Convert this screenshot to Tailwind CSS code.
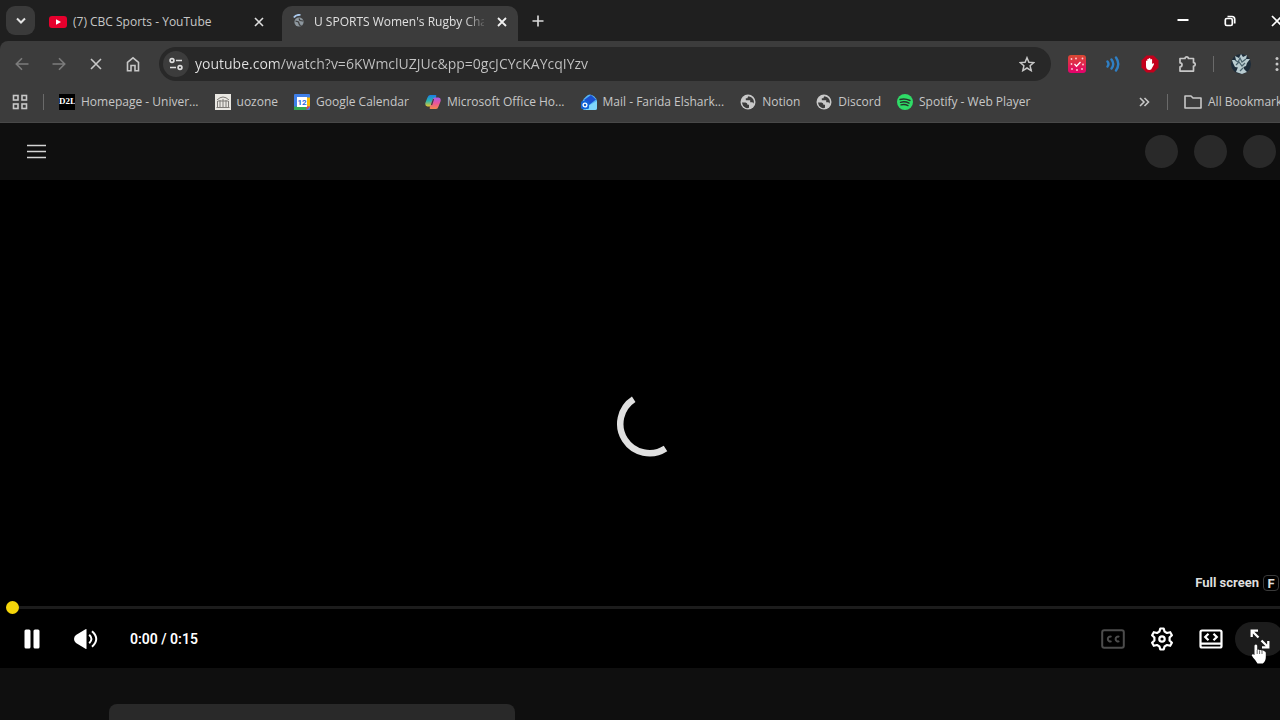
<!DOCTYPE html>
<html lang="en">
<head>
<meta charset="utf-8">
<meta name="viewport" content="width=device-width, initial-scale=1">
<title>U SPORTS Women's Rugby Championship - YouTube</title>
<script src="https://cdn.jsdelivr.net/npm/@tailwindcss/browser@4"></script>
</head>
<body class="flex h-screen flex-col overflow-hidden bg-[#0f0f0f] font-['Open_Sans','Noto_Sans',sans-serif] text-[#c7c7c7]">

<!-- Tab strip -->
<header class="flex h-[41px] flex-none items-end bg-[#1f1f1f]">
  <button aria-label="Search tabs" class="mb-1.5 ml-1.5 grid size-[29px] flex-none place-items-center rounded-[9px] bg-[#3a3a3a]">
    <svg class="size-3" viewBox="0 0 12 12" fill="none" stroke="#e3e3e3" stroke-width="2"><path d="M2 3.500l4 4 4-4"/></svg>
  </button>
  <div class="flex h-[35px] w-[247px] flex-none items-center pb-1 pl-3.5">
    <svg class="h-3 w-[18px] flex-none" viewBox="0 0 18 12"><rect width="18" height="12" rx="3" fill="#e6002d"/><path d="M7 3.200v5.600L12 6z" fill="#fff"/></svg>
    <a href="#" class="ml-1.5 w-[170px] truncate text-xs leading-5">(7) CBC Sports - YouTube</a>
    <button aria-label="Close tab" class="ml-2 grid size-4 flex-none place-items-center">
      <svg class="size-2.5" viewBox="0 0 10 10" stroke="#dedede" stroke-width="1.600"><path d="M1 1l8 8M9 1L1 9"/></svg>
    </button>
  </div>
  <div class="flex h-[35px] w-[236px] flex-none items-center rounded-t-[10px] bg-[#3c3c3c] pb-1 pl-2.5">
    <svg class="size-4 flex-none" viewBox="0 0 16 16"><path d="M1.800 3.500Q4 .5 8.500.8" fill="none" stroke="#a9c7ea" stroke-width="1.800"/><circle cx="7" cy="8" r="4.600" fill="#8d979e"/><path d="M3.500 7l3 1 1 3 2 .5M7 4.500l1 2 3 .5" fill="none" stroke="#3c3c3c" stroke-width="1.200"/></svg>
    <a href="#" class="ml-1.5 w-[170px] overflow-hidden whitespace-nowrap text-xs leading-5 text-[#e0e0e0] [mask-image:linear-gradient(to_right,black_150px,transparent_175px)]">U SPORTS Women's Rugby Championship</a>
    <button aria-label="Close tab" class="ml-2.5 grid size-4 flex-none place-items-center">
      <svg class="size-2.5" viewBox="0 0 10 10" stroke="#f2f2f2" stroke-width="1.800"><path d="M1 1l8 8M9 1L1 9"/></svg>
    </button>
  </div>
  <button aria-label="New tab" class="mb-2 ml-2 grid size-6 flex-none place-items-center">
    <svg class="size-3" viewBox="0 0 12 12" stroke="#dcdcdc" stroke-width="1.600"><path d="M6 .5v11M.5 6h11"/></svg>
  </button>
  <div class="-mr-5 ml-auto flex h-full flex-none items-center">
    <button aria-label="Minimize" class="grid h-10 w-[47px] place-items-center"><svg class="size-3" viewBox="0 0 12 12" stroke="#fff" stroke-width="2"><path d="M.5 5h11"/></svg></button>
    <button aria-label="Restore" class="grid h-10 w-[47px] place-items-center"><svg class="size-3" viewBox="0 0 12 12" fill="none" stroke="#fff" stroke-width="1.700"><rect x="1.300" y="3.500" width="7" height="7" rx="1.500"/><path d="M3.500 1.500h4.500a2.700 2.700 0 0 1 2.700 2.700V8.500"/></svg></button>
    <button aria-label="Close" class="grid h-10 w-[47px] place-items-center"><svg class="size-3" viewBox="0 0 12 12" stroke="#fff" stroke-width="1.700"><path d="M1 1l10 10M11 1L1 11"/></svg></button>
  </div>
</header>

<!-- Toolbar and bookmarks -->
<div class="flex-none bg-[#1f1f1f]">
<div class="rounded-tl-lg border-b border-[#484848] bg-[#3c3c3c]">
  <nav aria-label="Browser toolbar" class="flex h-[45px] items-center pl-1">
    <div class="flex flex-none gap-px">
      <button aria-label="Back" class="grid size-9 place-items-center"><svg class="size-3.5" viewBox="0 0 14 14" fill="none" stroke="#7c7c7c" stroke-width="1.600"><path d="M13.500 7H1.500M7 1.300L1.300 7 7 12.700"/></svg></button>
      <button aria-label="Forward" class="grid size-9 place-items-center"><svg class="size-3.5" viewBox="0 0 14 14" fill="none" stroke="#7c7c7c" stroke-width="1.600"><path d="M.5 7h12M7 1.300L12.700 7 7 12.700"/></svg></button>
      <button aria-label="Stop loading" class="grid size-9 place-items-center"><svg class="size-3" viewBox="0 0 12 12" stroke="#c7c7c7" stroke-width="1.600"><path d="M1 1l10 10M11 1L1 11"/></svg></button>
      <button aria-label="Home" class="grid size-9 place-items-center"><svg class="size-4" viewBox="0 0 16 16" fill="none" stroke="#c7c7c7" stroke-width="1.600"><path d="M2.500 6.300L8 1.800l5.500 4.500v8.400H10V9.500H6v5.200H2.500z"/></svg></button>
    </div>
    <div class="ml-2 flex h-[34px] min-w-0 flex-1 items-center rounded-full bg-[#282828] px-1">
      <button aria-label="View site information" class="grid size-[26px] flex-none place-items-center rounded-full bg-[#3c3c3c]">
        <svg class="size-3.5" viewBox="0 0 14 14" fill="none" stroke="#dcdcdc" stroke-width="1.700"><circle cx="3" cy="3.500" r="1.900"/><path d="M7 3.500h6M1 10.500h6"/><circle cx="11" cy="10.500" r="1.900"/></svg>
      </button>
      <input aria-label="Address and search bar" type="text" value="youtube.com/watch?v=6KWmclUZJUc&amp;pp=0gcJCYcKAYcqIYzv" class="ml-1.5 min-w-0 flex-1 bg-[linear-gradient(to_right,#e3e3e3_84px,#c4c4c4_84px)] bg-clip-text text-sm leading-6 text-transparent outline-none">
      <button aria-label="Bookmark this tab" class="mr-1 grid size-8 flex-none place-items-center"><svg class="size-4" viewBox="0 0 16 16" fill="none" stroke="#c7c7c7" stroke-width="1.500"><path d="M8 1.700l1.900 4.500 4.900.4-3.700 3.200 1.100 4.800L8 12l-4.200 2.600 1.100-4.800L1.200 6.600l4.900-.4z"/></svg></button>
    </div>
    <div class="-mr-[15px] ml-2 flex flex-none items-center">
      <button aria-label="Task extension" class="grid size-9 place-items-center"><svg class="size-[18px]" viewBox="0 0 18 18"><defs><linearGradient id="g1" x2="0" y2="1"><stop stop-color="#d94a32"/><stop offset="1" stop-color="#e5006d"/></linearGradient></defs><rect width="18" height="18" rx="3" fill="url(#g1)"/><path d="M6.500 9l2 2.200L12.500 7" fill="none" stroke="#fff" stroke-width="1.300"/><g fill="#ffd0d5"><circle cx="3.500" cy="4" r=".9"/><circle cx="8" cy="3.500" r=".9"/><circle cx="14.500" cy="3.500" r=".9"/><circle cx="3.500" cy="9" r=".9"/><circle cx="15" cy="9.500" r=".9"/><circle cx="4" cy="14" r=".9"/><circle cx="9" cy="15" r=".9"/><circle cx="14" cy="14" r=".9"/></g></svg></button>
      <button aria-label="Read aloud extension" class="grid size-9 place-items-center"><svg class="size-4" viewBox="0 0 16 16" fill="none" stroke="#2f7fc4" stroke-width="2.400" stroke-linecap="round"><path d="M2.500 5.500q2 2.500 0 5M6.500 3.500q3.500 4.500 0 9M11 1.500q4.500 6.500 0 13"/></svg></button>
      <button aria-label="Ad blocker extension" class="grid h-9 w-[37px] place-items-center"><svg class="size-[18px]" viewBox="0 0 18 18"><path d="M5.500.5h7l5 5v7l-5 5h-7l-5-5v-7z" fill="#c4001c"/><path d="M5 9V6q.8-1 1.300 0V4.300q.9-1 1.500 0V3.500q.9-1 1.600 0V4.500q.9-.9 1.700 0V9l1-.8q1.400 0 .8 1.200l-1.900 3.600Q10.500 15 8.500 15 5 15 5 11z" fill="#fff"/></svg></button>
      <button aria-label="Extensions" class="grid h-9 w-[37px] place-items-center"><svg class="size-[18px]" viewBox="0 0 18 18" fill="none" stroke="#c7c7c7" stroke-width="1.700" stroke-linejoin="round"><path d="M2 3.500h5a1.700 1.700 0 0 1 3.400 0H15.500v4.200a1.700 1.700 0 0 1 0 3.400v5H2v-4.300a2 2 0 0 0 0-4z"/></svg></button>
      <span class="mx-2 h-4 w-px bg-[#6a6a6a]"></span>
      <button aria-label="Profile" class="grid h-9 w-[37px] place-items-center"><svg class="size-[22px]" viewBox="0 0 22 22"><circle cx="11" cy="11" r="10" fill="#1d2c3a"/><g fill="#b9ccd1"><path d="M2 7l4 0-1-4 4 2 2-4 2 3 4-2-1 4 4 0-3 4-1 3-5 2-6-1-2-4z"/><path d="M8 14l5-1 1 3 3 3-5 2-6-2z"/></g><path d="M5 7l3 2 2-4 2 4 4-3M6 12l3-3 3 4 3-3M10 18l3-3" stroke="#49626e" stroke-width="1.200" fill="none"/></svg></button>
      <button aria-label="Menu" class="grid size-9 place-items-center"><svg class="size-4" viewBox="0 0 16 16" fill="#c7c7c7"><circle cx="8" cy="2.500" r="1.500"/><circle cx="8" cy="8" r="1.500"/><circle cx="8" cy="13.500" r="1.500"/></svg></button>
    </div>
  </nav>

  <nav aria-label="Bookmarks" class="flex h-9 items-center pb-[5px] pl-3 text-xs leading-5 whitespace-nowrap">
    <button aria-label="Tab groups" class="flex-none"><svg class="size-4" viewBox="0 0 16 16" fill="none" stroke="#c7c7c7" stroke-width="1.600"><rect x="1.500" y="1.500" width="4.500" height="4.500"/><rect x="10" y="1.500" width="4.500" height="4.500"/><rect x="1.500" y="10" width="4.500" height="4.500"/><rect x="10" y="10" width="4.500" height="4.500"/></svg></button>
    <span class="mx-[15px] h-4 w-px flex-none bg-[#6a6a6a]"></span>
    <div class="flex flex-none gap-4">
      <a href="#" class="flex items-center gap-1.5"><span class="grid size-4 place-items-center overflow-hidden bg-black font-['Liberation_Serif',serif] text-[9px] leading-none font-bold text-white">D2L</span>Homepage - Univer...</a>
      <a href="#" class="flex items-center gap-1.5"><svg class="size-4" viewBox="0 0 16 16"><rect width="16" height="16" fill="#e9e7e2"/><path d="M2 6q6-6 12 0M2.500 7v6M5 6v7M8 5v8M11 6v7M13.500 7v6M1.500 13.500h13M3 7h10" fill="none" stroke="#7d7a76"/></svg>uozone</a>
      <a href="#" class="flex items-center gap-1.5"><svg class="size-4" viewBox="0 0 16 16"><rect width="16" height="16" rx="1" fill="#3f7fe8"/><path d="M12.500 3.500H16V12.500h-3.500z" fill="#fbbc04"/><path d="M0 12.500h12.500V16H1q-1 0-1-1z" fill="#34a853"/><path d="M12.500 12.500H16L12.500 16z" fill="#ea4335"/><rect x="3" y="3" width="10" height="10" fill="#fff"/><text x="8" y="11" text-anchor="middle" font-family="Roboto" font-size="8" font-weight="700" fill="#2a6be0">12</text></svg>Google Calendar</a>
      <a href="#" class="flex items-center gap-1.5"><svg class="size-4" viewBox="0 0 16 16"><defs><linearGradient id="c1" x2="0" y2="1"><stop stop-color="#1b7de8"/><stop offset=".5" stop-color="#27b6b0"/><stop offset="1" stop-color="#e8c52e"/></linearGradient><linearGradient id="c2" x2="0" y2="1"><stop stop-color="#a95bea"/><stop offset=".5" stop-color="#ec5598"/><stop offset="1" stop-color="#f58a4b"/></linearGradient></defs><path d="M5 1H10.500q1.200.3 .7 1.500L8.500 10.500q-.8 2-2.500 2H2.500Q-.5 12 .5 8.500L2.500 3.500Q3.300 1 5 1z" fill="url(#c1)"/><path d="M11 15H5.500q-1.200-.3-.7-1.500L7.500 5.500q.8-2 2.500-2h3.500q3 .5 2 4L13.500 12.500q-.8 2.500-2.500 2.500z" fill="url(#c2)"/><path d="M8.500 5L6.500 11" stroke="#3c3c3c" stroke-width="1.200"/></svg>Microsoft Office Ho...</a>
      <a href="#" class="flex items-center gap-1.5"><svg class="size-4" viewBox="0 0 16 16"><path d="M1.500 7Q5 1 9 .5q5 1 7 6V14q0 2-2 2H3.500q-2 0-2-2z" fill="#54b4f5"/><path d="M3 6l7-5 5 4.500L8 11z" fill="#1b50d0"/><path d="M5 13l11-6v7q0 2-2 2H5z" fill="#7fd6fb"/><rect y="7" width="8" height="8" rx="1.500" fill="#1263d6"/><circle cx="4" cy="11" r="1.900" fill="none" stroke="#fff" stroke-width="1.300"/></svg>Mail - Farida Elshark...</a>
      <a href="#" class="flex items-center gap-1.5"><svg class="size-4" viewBox="0 0 16 16"><circle cx="8" cy="8" r="7.500" fill="#c9c9c9"/><path d="M2 8.500h3.500q2 .2 2 2.200H9v3q-1.500.7-3 .3Q2.500 12.500 2 8.500zM8.500 2.300q-1 .7-1 2H5.800v1.900h4.400v2h2q1 .2 1.500 1.500Q15 4 8.500 2.300z" fill="#3c3c3c"/></svg>Notion</a>
      <a href="#" class="flex items-center gap-1.5"><svg class="size-4" viewBox="0 0 16 16"><circle cx="8" cy="8" r="7.500" fill="#c9c9c9"/><path d="M2 8.500h3.500q2 .2 2 2.200H9v3q-1.500.7-3 .3Q2.500 12.500 2 8.500zM8.500 2.300q-1 .7-1 2H5.800v1.900h4.400v2h2q1 .2 1.500 1.500Q15 4 8.500 2.300z" fill="#3c3c3c"/></svg>Discord</a>
      <a href="#" class="flex items-center gap-1.5"><svg class="size-4" viewBox="0 0 16 16"><circle cx="8" cy="8" r="8" fill="#2fdc67"/><path d="M3 5.500q5-1.500 10 1M3.500 8.300q4.500-1.300 8.500.9M4 10.900q3.800-1 7 .7" fill="none" stroke="#26352b" stroke-width="1.400" stroke-linecap="round"/></svg>Spotify - Web Player</a>
    </div>
    <div class="-mr-2 ml-auto flex flex-none items-center">
      <button aria-label="More bookmarks"><svg class="size-3" viewBox="0 0 12 12" fill="none" stroke="#c7c7c7" stroke-width="1.600"><path d="M1 2l4 4-4 4M5.500 2l4 4-4 4"/></svg></button>
      <span class="mx-4 h-4 w-px bg-[#6a6a6a]"></span>
      <a href="#" class="flex items-center gap-1.5"><svg class="h-4 w-[18px]" viewBox="0 0 18 16" fill="none" stroke="#c7c7c7" stroke-width="1.600"><path d="M1 2h6l2 2h8v10H1z" stroke-linejoin="round"/></svg>All Bookmarks</a>
    </div>
  </nav>
</div>
</div>

<!-- Site masthead -->
<div class="flex h-[57px] flex-none items-center justify-between pr-1 pl-6">
  <button aria-label="Guide" class="grid size-6 place-items-center"><svg class="h-4 w-5" viewBox="0 0 20 16" stroke="#d4d4d4" stroke-width="1.400"><path d="M1 1.500h19M1 7.500h19M1 13.500h19"/></svg></button>
  <div class="flex gap-4">
    <span class="size-[33px] rounded-full bg-[#292929]"></span>
    <span class="size-[33px] rounded-full bg-[#292929]"></span>
    <span class="size-[33px] rounded-full bg-[#292929]"></span>
  </div>
</div>

<!-- Player -->
<main class="relative flex min-h-0 flex-1 flex-col bg-black font-[Roboto,sans-serif]">
  <div class="grid min-h-0 flex-1 place-items-center pt-24 pl-3.5">
    <svg class="size-16" viewBox="0 0 64 64" fill="none" stroke="#e0e0e0" stroke-width="6.500"><path d="M18.700 5.200A28.500 28.500 0 0 0 50.500 54.500"/></svg>
  </div>
  <div class="flex flex-none items-center justify-end gap-1 pr-px pb-2.5 text-[13px] leading-4 font-bold text-[#dedede]">
    Full screen
    <kbd class="grid size-4 place-items-center rounded border border-[#3a3a3a] font-[Roboto,sans-serif] text-[13px] leading-none font-bold text-[#dedede]">F</kbd>
  </div>
  <input aria-label="Seek slider" type="range" min="0" max="15" value="0" class="ml-1.5 h-[13px] flex-none appearance-none bg-transparent [&::-webkit-slider-runnable-track]:h-[3px] [&::-webkit-slider-runnable-track]:bg-[#1c1c1c] [&::-webkit-slider-thumb]:-mt-[5px] [&::-webkit-slider-thumb]:size-[13px] [&::-webkit-slider-thumb]:appearance-none [&::-webkit-slider-thumb]:rounded-full [&::-webkit-slider-thumb]:bg-[#f5d60a]">
  <div class="flex h-[54px] flex-none items-center pb-1 pl-3 text-white">
    <button aria-label="Pause" class="grid size-10 place-items-center"><svg class="h-5 w-4" viewBox="0 0 16 20" fill="#fff"><rect x=".5" y=".5" width="6" height="19" rx="1.500"/><rect x="9.500" y=".5" width="6" height="19" rx="1.500"/></svg></button>
    <button aria-label="Mute" class="ml-3.5 grid size-10 place-items-center"><svg class="h-[22px] w-6" viewBox="0 0 24 22"><path d="M12.500 1.600v18.800q0 1-1 .4L2 15Q0 13.500 0 11t2-4L11.500 1.200q1-.6 1 .4z" fill="#fff"/><path d="M15.200 6.800q4.500 4.200 0 8.400M18 3.200q8.500 7.800 0 15.600" fill="none" stroke="#fff" stroke-width="2"/></svg></button>
    <span class="ml-6 text-sm leading-5 font-semibold">0:00 / 0:15</span>
    <div class="-mr-1 ml-auto flex flex-none">
      <button aria-label="Subtitles unavailable" class="grid h-[34px] w-[49px] place-items-center"><svg class="h-5 w-6" viewBox="0 0 24 20" fill="none" stroke="#4c4c4c" stroke-width="2"><rect x="1.200" y="1.200" width="21.600" height="17.600" rx="2"/><path d="M10.500 7.800A2.500 2.500 0 1 0 10.500 12.200M18.300 7.800A2.500 2.500 0 1 0 18.300 12.200"/></svg></button>
      <button aria-label="Settings" class="grid h-[34px] w-[49px] place-items-center"><svg class="size-6" viewBox="0 0 24 24" fill="none" stroke="#fff" stroke-width="2.200" stroke-linejoin="round"><path d="M10.300 1.500h3.400l.9 3.100 2.400 1.400 3.200-.8 1.700 3-2.300 2.400v2.800l2.300 2.400-1.700 3-3.200-.8-2.400 1.400-.9 3.100h-3.400l-.9-3.100L7 18l-3.200.8-1.700-3 2.300-2.400v-2.800L2.100 8.200l1.700-3L7 6l2.400-1.400z"/><circle cx="12" cy="12" r="2.700"/></svg></button>
      <button aria-label="Theater mode" class="grid h-[34px] w-[49px] place-items-center"><svg class="h-5 w-6" viewBox="0 0 24 20" fill="none" stroke="#fff" stroke-width="2.200"><rect x="1.500" y="1.500" width="21" height="17" rx="1.500"/><path d="M2 14.700h20M9.500 4.700L6.200 8l3.300 3.300M14.500 4.700L17.800 8l-3.300 3.300"/></svg></button>
      <button aria-label="Full screen" class="grid h-[34px] w-[49px] place-items-center rounded-full bg-[#1c1c1c]"><svg class="size-5" viewBox="0 0 20 20" fill="none" stroke="#fff" stroke-width="2.300"><path d="M8 1.700H1.700V8M2 2l6.500 6.500M12 18.300h6.300V12M18 18l-6.500-6.500"/></svg></button>
    </div>
  </div>
  <!-- Pointer hovering over the full screen button -->
  <svg class="pointer-events-none absolute right-[13px] bottom-1 h-5 w-4" viewBox="0 0 16 20"><path d="M3.500 1.500Q5-.3 6.200 1.500V6q1.300-1 2.300.3 1.300-.8 2.300.4 1.500-.7 2.500.5 1.200 0 1.500 1.500V13q0 4-3 6.500H6.500Q4.500 16 2 13.500L.7 11.300Q1.500 9.500 3.500 11z" fill="#fff"/><path d="M6.200 6v4M8.600 6.500v3.500M11 7v3" stroke="#444" stroke-width=".8"/></svg>
</main>

<!-- Placeholder for the video title -->
<div class="flex h-[52px] flex-none items-end pl-[109px]">
  <div class="h-4 w-[406px] rounded-t-lg bg-[#292929]"></div>
</div>
</body>
</html>
